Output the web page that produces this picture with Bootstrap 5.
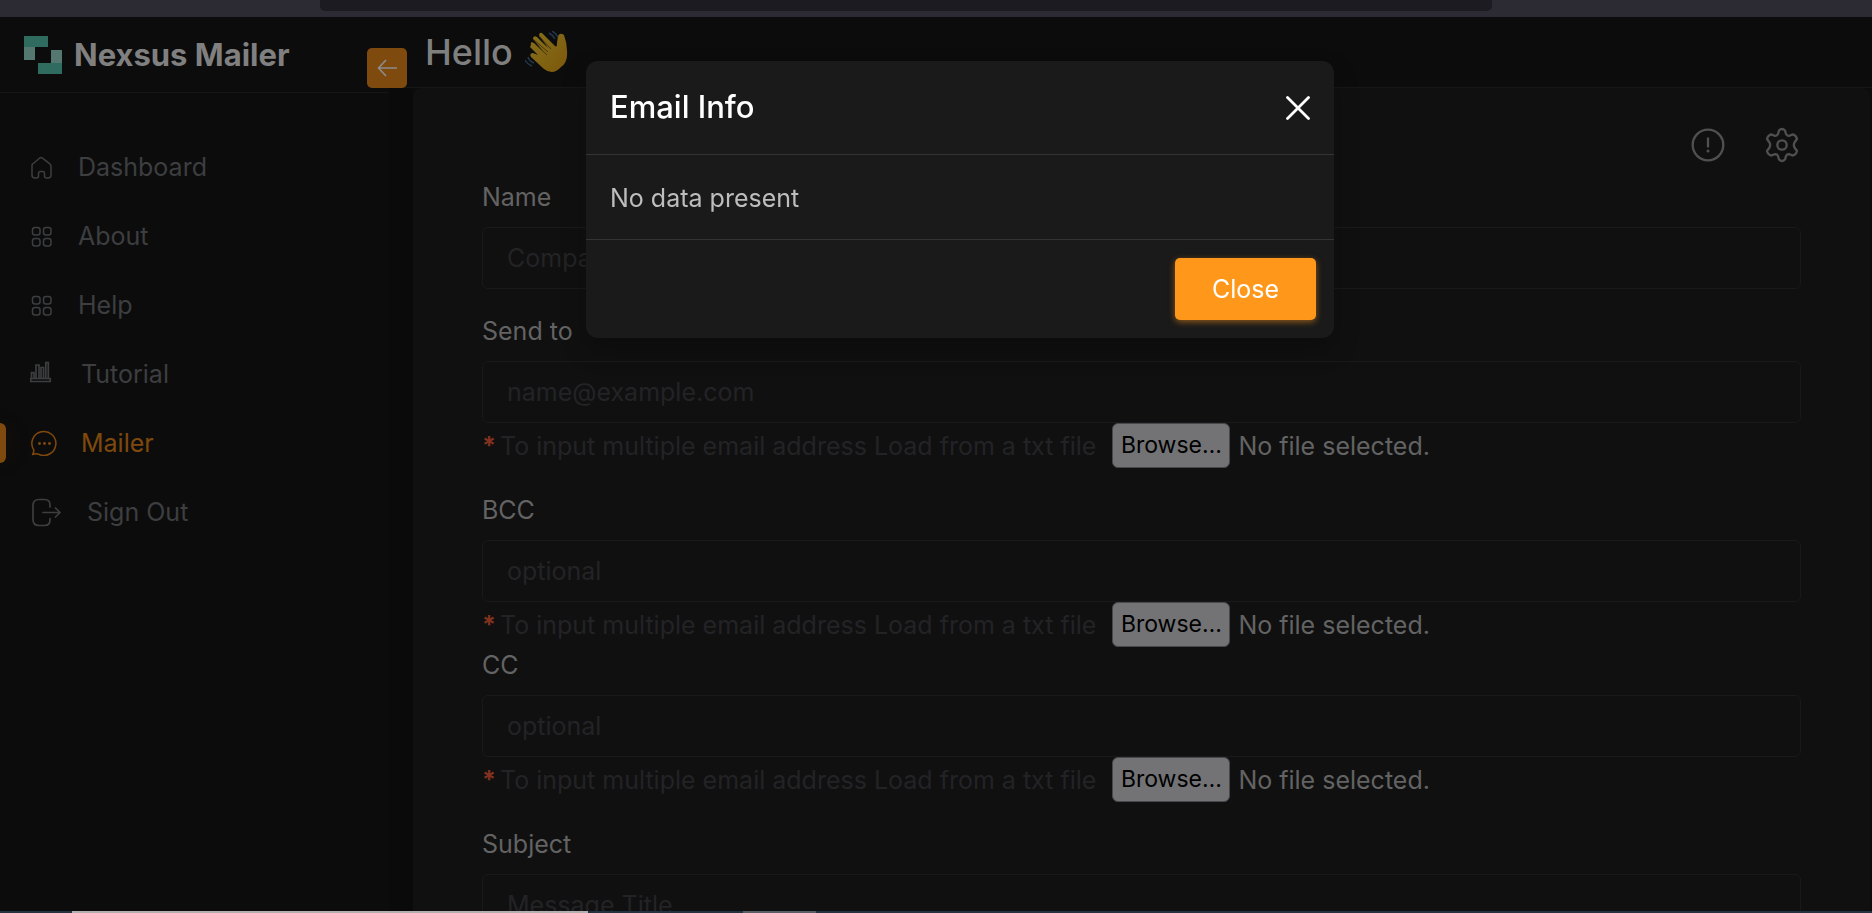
<!DOCTYPE html>
<html lang="en" data-bs-theme="dark">
<head>
<meta charset="utf-8">
<meta name="viewport" content="width=device-width, initial-scale=1">
<title>Nexsus Mailer</title>
<link href="https://cdn.jsdelivr.net/npm/bootstrap@5.3.0/dist/css/bootstrap.min.css" rel="stylesheet">
<style>
:root{--line:#171717;--muted:#3d3e40;--faint:#232326;--label:#636363;--accent:#7f4a0d}
body{font-family:Inter,"Open Sans",sans-serif;font-size:25px;line-height:36px;background:#0c0c0c;color:var(--label)}
.shell{height:100vh;overflow:hidden}
.toolbar-strip{height:17px;background:#2c2a33;flex:none}
.address{width:1172px;max-width:63%;height:11px;margin-left:320px;background:#1c1b22;border-radius:0 0 5px 5px}
.side{width:389px}
.side-head{height:76px;padding:0 24px;border-bottom:1px solid #151515;gap:12px}
.brand{font-size:31px;font-weight:700;color:#808080}
.side-nav{padding:56px 0 0;gap:33px}
.side-nav .nav-link{padding:0 0 0 30px;color:var(--muted);gap:26px}
.side-nav .wide{gap:24px}
.side-nav .active{color:#80490c;position:relative}
.side-nav .active::before{content:"";position:absolute;left:0;top:-2px;width:6px;height:40px;border-radius:0 6px 6px 0;background:var(--accent);box-shadow:0 0 24px #7f4a0d33}
.gutter{width:24px;background:#0a0a0a}
.main-head{height:71px;flex:none;border-bottom:1px solid var(--line);padding:14px 0 0 36px}
.main-head h1{font-size:36px;line-height:36px;font-weight:500;color:#7f7f7f;gap:12px}
.collapse-btn{position:absolute;left:-22px;top:31px;width:40px;height:40px;background:var(--accent);border-radius:5px;color:#8c8c8c}
.panel{background:#101010;border-radius:8px 8px 0 0;margin-right:2px;padding:38px 69px 0}
.tools{gap:39px}
.tools .btn{color:#505050}
.mail-form{padding-top:15px}
.field{margin-bottom:24px}
.field.tight{margin-bottom:0}
.field .form-label{margin:0 0 12px;display:block}
.field .form-control{height:62px;background:transparent;border:1px solid #191919;border-radius:6px;padding:0 24px;font-size:25px}
.field .form-control::placeholder{color:var(--faint);opacity:1}
.hint{color:var(--faint)}
.hint b{color:#84321f}
.hint .picked{color:var(--label)}
.pick{font-size:23px;width:118px;height:45px;text-align:center;padding:3px 0;background:#737375;border:1px solid #47474c;border-radius:6px;color:#000;cursor:pointer}
.info-modal{padding-left:48px;pointer-events:none}
.info-modal .modal-dialog{max-width:748px;margin-top:61px}
.info-modal .modal-content{background:#1a1a1a;border:0;border-radius:12px;color:#bdbdbd;box-shadow:0 12px 24px #00000040}
.info-modal .modal-header{height:94px;padding:0 24px;border-bottom:1px solid #333}
.info-modal .modal-title{font-size:31px;font-weight:500;color:#fff}
.info-modal .modal-body{padding:25px 24px 23px}
.info-modal .modal-footer{padding:18px;border-top:1px solid #333}
.info-modal .modal-footer .btn{margin:0;width:141px;height:62px;padding:2px 0 0;font-size:25px;border:0;border-radius:5px;background:#ff981a;color:#fff;box-shadow:0 2px 6px #ff981a80}
.task-strip{height:2px;flex:none;background:#243342}
.task-strip .tab-a{width:516px;margin-left:72px;background:#b3aeb0}
.task-strip .tab-b{width:73px;margin-left:155px;background:#5a5f66}
</style>
</head>
<body>
<div class="shell d-flex flex-column">
  <div class="toolbar-strip"><div class="address"></div></div>
  <div class="d-flex flex-grow-1 overflow-hidden">
    <aside class="side flex-shrink-0">
      <div class="side-head d-flex align-items-center">
        <svg width="38" height="38" viewBox="0 0 38 38"><path fill="#54786f" d="M0 10h11v14H0zM27 14h11v14H27z"/><path fill="#306b60" d="M0 0h24v11H0zM14 27h24v11H14z"/></svg>
        <span class="brand">Nexsus Mailer</span>
      </div>
      <nav class="nav flex-column side-nav">
        <a class="nav-link d-flex align-items-center" href="#"><svg width="22" height="24" viewBox="0 0 22 24" fill="none" stroke="currentColor" stroke-width="1.5" stroke-linejoin="round"><path d="M2 10.500Q2 9.500 3 8.700L9.500 3.200Q11 2 12.500 3.200L19.500 8.700Q21 9.800 21 11.500V20Q21 23 18 23H16.500Q14.500 23 14.500 21V18.500Q14.500 16.500 12.500 16.500H10.500Q8.500 16.500 8.500 18.500V21Q8.500 23 6.500 23H5Q2 23 2 20Z"/></svg>Dashboard</a>
        <a class="nav-link d-flex align-items-center" href="#"><svg width="22" height="22" viewBox="0 0 22 22" fill="none" stroke="currentColor" stroke-width="1.500"><rect x="2.500" y="2.500" width="7.500" height="7.500" rx="2.500"/><rect x="13.500" y="2.500" width="7.500" height="7.500" rx="2.500"/><rect x="2.500" y="13.500" width="7.500" height="7.500" rx="2.500"/><rect x="13.500" y="13.500" width="7.500" height="7.500" rx="2.500"/></svg>About</a>
        <a class="nav-link d-flex align-items-center" href="#"><svg width="22" height="22" viewBox="0 0 22 22" fill="none" stroke="currentColor" stroke-width="1.500"><rect x="2.500" y="2.500" width="7.500" height="7.500" rx="2.500"/><rect x="13.500" y="2.500" width="7.500" height="7.500" rx="2.500"/><rect x="2.500" y="13.500" width="7.500" height="7.500" rx="2.500"/><rect x="13.500" y="13.500" width="7.500" height="7.500" rx="2.500"/></svg>Help</a>
        <a class="nav-link wide d-flex align-items-center" href="#"><svg width="27" height="26" viewBox="0 0 27 26" fill="none" stroke="currentColor" stroke-width="1.700"><path d="M.7 17.500h19.500v3H.7zM1.500 17.500v-5.800h2.500v5.800M6 17.500V4h3v13.500M11 17.500V6.500h2.500v11M15.800 17.500V1.500h2.500v16"/></svg>Tutorial</a>
        <a class="nav-link wide active d-flex align-items-center" href="#"><svg width="27" height="26" viewBox="0 0 27 26" fill="none" stroke="currentColor" stroke-width="1.500" stroke-linejoin="round"><path d="M3.800 20A12 12 0 1 1 8.500 24.200Q6.500 23.300 2.500 24.500Q4 22.500 3.800 20Z"/><g fill="currentColor" stroke="none"><circle cx="9.500" cy="13.500" r="1.400"/><circle cx="14.500" cy="13.500" r="1.400"/><circle cx="19.500" cy="13.500" r="1.400"/></g></svg>Mailer</a>
        <a class="nav-link d-flex align-items-center" href="#"><svg width="31" height="29" viewBox="0 0 31 29" fill="none" stroke="currentColor" stroke-width="1.700" stroke-linecap="round" stroke-linejoin="round"><path d="M20 9V7Q20 1.500 14.500 1.500H9Q3 1.500 3 7.500V21.500Q3 27.500 9 27.500H14.500Q20 27.500 20 22V20.500M13 14.500H30M25.500 10L30 14.500L25.500 19"/></svg>Sign Out</a>
      </nav>
    </aside>
    <main class="flex-grow-1 d-flex flex-column position-relative">
      <button class="btn p-0 collapse-btn d-flex align-items-center justify-content-center" type="button" aria-label="Collapse sidebar"><svg width="20" height="18" viewBox="0 0 20 18" fill="none" stroke="currentColor" stroke-width="1.600"><path d="M9 1L1.500 9L9 17M1.500 9H20"/></svg></button>
      <header class="main-head">
        <h1 class="d-flex align-items-center mb-0">Hello
          <svg width="44" height="42" viewBox="0 0 44 42"><defs><linearGradient id="skin" x1="0" y1="0" x2="1" y2="1"><stop offset="0" stop-color="#86701c"/><stop offset="1" stop-color="#7c580a"/></linearGradient></defs><path fill="url(#skin)" d="M6 14Q5 10 9 12L19 21L8 8Q8 4 12 6L23 17L14 4Q15 0 18 3L30 15Q32 17 32 12L33 5Q35 1 39 4Q42 12 42 20Q43 31 36 36Q28 45 19 38L6 26Q4 22 8 22L13 24L5 16Z"/><path fill="none" stroke="#4a380c" stroke-width="1" d="M9 12L22 24M8 8L23 21M14 5L26 18"/><path fill="none" stroke="#24384d" stroke-width="1.500" d="M24 2Q28 4 30 8M27 0Q31 2 33 6M3 26Q4 30 9 32M0 29Q2 33 7 35"/></svg>
        </h1>
      </header>
      <div class="d-flex flex-grow-1 overflow-hidden">
        <div class="gutter flex-shrink-0"></div>
        <section class="panel flex-grow-1">
          <div class="tools d-flex justify-content-end">
            <button class="btn p-0 border-0 d-flex" type="button" aria-label="Email info"><svg width="36" height="38" viewBox="0 0 36 38" fill="none" stroke="currentColor" stroke-width="2.300"><circle cx="18" cy="19" r="15.300"/><path stroke-linecap="round" d="M18 12.500V20.500"/><circle cx="18" cy="25" r="1.500" fill="currentColor" stroke="none"/></svg></button>
            <button class="btn p-0 border-0 d-flex" type="button" aria-label="Settings"><svg width="36" height="38" viewBox="0 0 36 38" fill="none" stroke="currentColor" stroke-width="2.300" stroke-linejoin="round"><circle cx="17" cy="19" r="4.700"/><path d="M14 4.500Q17 1.500 20 4.500L21 8Q22 10 24 9.800L27.500 8.500Q31 9 32 13L29.500 16.500Q28.200 19 29.500 21.500L32 25Q31 29 27.500 29.500L24 28.200Q22 28 21 30L20 33.500Q17 36.500 14 33.500L13 30Q12 28 10 28.200L6.500 29.500Q3 29 2 25L4.500 21.500Q5.800 19 4.500 16.500L2 13Q3 9 6.500 8.500L10 9.800Q12 10 13 8Z"/></svg></button>
          </div>
          <form class="mail-form">
            <div class="field">
              <label class="form-label" for="name">Name</label>
              <input class="form-control" id="name" type="text" placeholder="Company Name">
            </div>
            <div class="field">
              <label class="form-label" for="to">Send to</label>
              <input class="form-control" id="to" type="email" placeholder="name@example.com">
              <div class="hint d-flex align-items-center"><b>*</b><span class="ms-1">To input multiple email address Load from a txt file</span><label class="pick ms-3" for="toFile">Browse…</label><input class="visually-hidden" type="file" id="toFile"><span class="picked ms-2">No file selected.</span></div>
            </div>
            <div class="field tight">
              <label class="form-label" for="bcc">BCC</label>
              <input class="form-control" id="bcc" type="text" placeholder="optional">
              <div class="hint d-flex align-items-center"><b>*</b><span class="ms-1">To input multiple email address Load from a txt file</span><label class="pick ms-3" for="bccFile">Browse…</label><input class="visually-hidden" type="file" id="bccFile"><span class="picked ms-2">No file selected.</span></div>
            </div>
            <div class="field">
              <label class="form-label" for="cc">CC</label>
              <input class="form-control" id="cc" type="text" placeholder="optional">
              <div class="hint d-flex align-items-center"><b>*</b><span class="ms-1">To input multiple email address Load from a txt file</span><label class="pick ms-3" for="ccFile">Browse…</label><input class="visually-hidden" type="file" id="ccFile"><span class="picked ms-2">No file selected.</span></div>
            </div>
            <div class="field">
              <label class="form-label" for="subject">Subject</label>
              <input class="form-control" id="subject" type="text" placeholder="Message Title">
            </div>
          </form>
        </section>
      </div>
    </main>
  </div>
  <div class="task-strip d-flex"><div class="tab-a"></div><div class="tab-b"></div></div>
</div>
<div class="modal show d-block info-modal" tabindex="-1" role="dialog" aria-labelledby="infoTitle">
  <div class="modal-dialog">
    <div class="modal-content">
      <div class="modal-header d-flex align-items-center justify-content-between">
        <h2 class="modal-title" id="infoTitle">Email Info</h2>
        <button class="btn p-0 border-0 text-white d-flex" type="button" aria-label="Close dialog"><svg width="24" height="24" viewBox="0 0 24 24" fill="none" stroke="currentColor" stroke-width="2.800" stroke-linecap="round"><path d="M1.500 1.500L22.500 22.500M22.500 1.500L1.500 22.500"/></svg></button>
      </div>
      <div class="modal-body">No data present</div>
      <div class="modal-footer"><button class="btn" type="button">Close</button></div>
    </div>
  </div>
</div>
<script src="https://cdn.jsdelivr.net/npm/bootstrap@5.3.0/dist/js/bootstrap.bundle.min.js"></script>
</body>
</html>
